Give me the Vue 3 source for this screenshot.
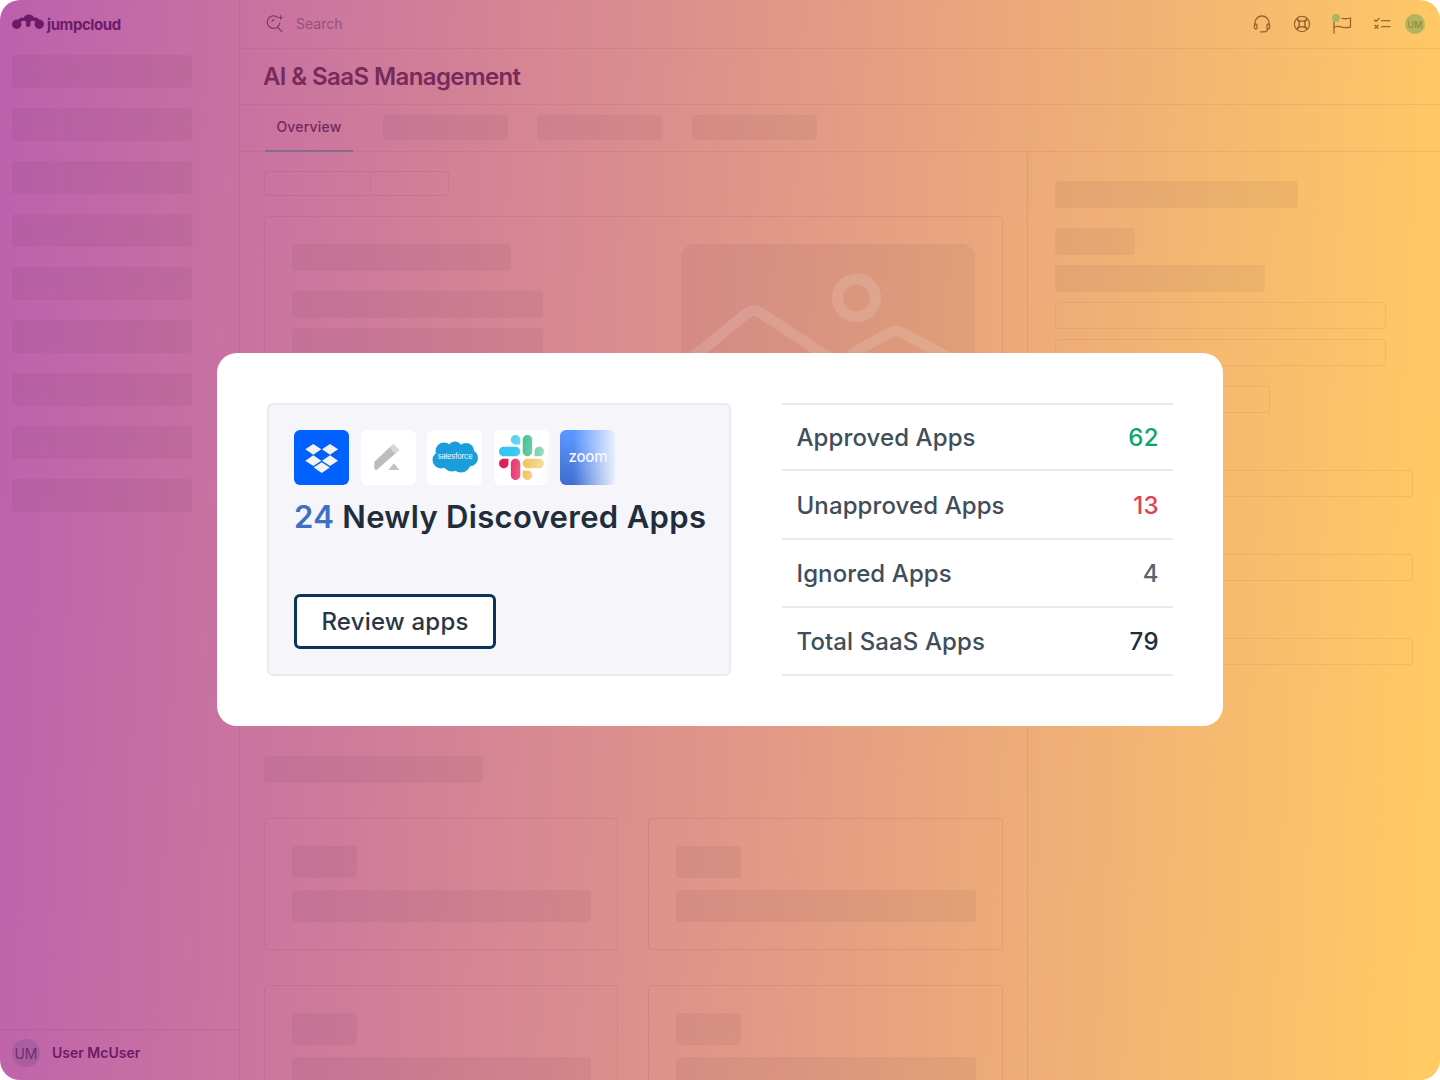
<script setup>
const navBars = 9
const rows = [
  { label: 'Approved Apps', value: 62, tone: 'green' },
  { label: 'Unapproved Apps', value: 13, tone: 'red' },
  { label: 'Ignored Apps', value: 4, tone: 'gray' },
  { label: 'Total SaaS Apps', value: 79, tone: 'dark' }
]
</script>

<template>
  <div class="page">
    <aside class="sidebar">
      <div class="logo">
        <svg class="logo-mark" viewBox="0 0 32 16" width="32" height="16">
          <circle cx="4.7" cy="10.3" r="4.7" fill="#6b1c68" />
          <circle cx="27.3" cy="10.3" r="4.7" fill="#6b1c68" />
          <path d="M6 6C8 3 10 3 11.5 4C13 -0.5 20 -1 22.5 4C24 3 26 3.5 27 6L23 8C22 6.5 20 6.5 18.5 7.5L18.5 12C18.5 13 14 13 14 12L14 7.5C12.5 6.5 10 6.5 9 8Z" fill="#6b1c68" />
        </svg>
        <span class="logo-text">jumpcloud</span>
      </div>
      <div class="nav">
        <div v-for="n in navBars" :key="n" class="skel nav-bar"></div>
      </div>
      <div class="user">
        <span class="user-avatar">UM</span>
        <span class="user-name">User McUser</span>
      </div>
    </aside>

    <main class="main">
      <header class="topbar">
        <div class="search">
          <svg viewBox="0 0 20 20" width="20" height="20" fill="none" stroke="#7d3a6c" stroke-width="1.2" stroke-linecap="round">
            <path d="M12.5 3.2A6.3 6.3 0 1 0 14.8 9" />
            <path d="M12.4 13.2L17 17.6" />
            <path d="M7 7.5a2.6 2.6 0 0 1 2-1.8" />
            <path d="M15.6 1.6v4M13.6 3.6h4" stroke-width="1" />
          </svg>
          <span class="search-text">Search</span>
        </div>
        <div class="tools">
          <svg viewBox="0 0 20 20" width="20" height="20" fill="none" stroke="#99652a" stroke-width="1.3" stroke-linecap="round">
            <path d="M3 11V9a7 7 0 0 1 14 0v2" />
            <rect x="2.4" y="10" width="2.6" height="5" rx="1.3" />
            <rect x="15" y="10" width="2.6" height="5" rx="1.3" />
            <path d="M15.5 15c0 2-1.5 2.8-3.5 2.8H8.5" />
          </svg>
          <svg viewBox="0 0 20 20" width="20" height="20" fill="none" stroke="#99652a" stroke-width="1.3">
            <circle cx="10" cy="10" r="7.6" />
            <circle cx="10" cy="10" r="3.1" />
            <path d="M4.7 4.7l3 3M15.3 4.7l-3 3M4.7 15.3l3-3M15.3 15.3l-3-3" stroke-width="2" />
          </svg>
          <span class="flag">
            <svg viewBox="0 0 20 20" width="20" height="20" fill="none" stroke="#99652a" stroke-width="1.3" stroke-linecap="round" stroke-linejoin="round">
              <path d="M2 19V8" />
              <path d="M2 13c3-1 4-1 6-.3s6 1.5 10.5.3V4c-3 1-5.5 1-8.5.3" />
            </svg>
            <i class="flag-dot"></i>
          </span>
          <svg viewBox="0 0 20 20" width="20" height="20" fill="none" stroke="#99652a" stroke-width="1.3" stroke-linecap="round" stroke-linejoin="round">
            <path d="M9.6 6.7H18M9.6 12.7H18" />
            <path d="M2.5 6l1.5 1.5L7 4.5" />
            <path d="M3 11.2l3 3M6 11.2l-3 3" />
          </svg>
          <span class="top-avatar">UM</span>
        </div>
      </header>

      <div class="title-row">
        <h1>AI &amp; SaaS Management</h1>
      </div>

      <nav class="tabs">
        <span class="tab-active">Overview</span>
        <div class="skel tab-skel"></div>
        <div class="skel tab-skel"></div>
        <div class="skel tab-skel"></div>
      </nav>

      <div class="body">
        <section class="col-left">
          <div class="segment"><span></span><span></span></div>

          <div class="card hero">
            <div class="hero-text">
              <div class="skel hero-title"></div>
              <div class="skel hero-line"></div>
              <div class="skel hero-line"></div>
            </div>
            <div class="skel hero-image">
              <svg viewBox="0 0 294 200" width="294" height="200" fill="none" stroke="rgba(255,255,255,0.13)" stroke-width="11" stroke-linejoin="round" stroke-linecap="round">
                <circle cx="175.5" cy="54" r="19" />
                <path d="M10 115L66 69Q73 64 80 69L150 115" />
                <path d="M172 109L208 89Q215 85 222 89L270 115" />
              </svg>
            </div>
          </div>

          <div class="skel section-title"></div>

          <div class="tiles">
            <div v-for="n in 4" :key="n" class="card tile">
              <div class="skel tile-a"></div>
              <div class="skel tile-b"></div>
            </div>
          </div>
        </section>

        <section class="col-right">
          <div class="skel r1"></div>
          <div class="skel r2"></div>
          <div class="skel r3"></div>
          <div class="field f1"></div>
          <div class="field f1"></div>
          <div class="field f2"></div>
          <div class="field f3"></div>
          <div class="field f3"></div>
          <div class="field f3"></div>
        </section>
      </div>
    </main>

    <div class="modal">
      <div class="discover">
        <div class="apps">
          <div class="app dropbox">
            <svg viewBox="0 0 55 55" width="55" height="55" fill="#f4f3f0">
              <path d="M11.3 19.3l8-5.4 8 5.4-8 5.4z" />
              <path d="M28 19.3l8-5.4 8 5.4-8 5.4z" />
              <path d="M11.3 30.7l8-5.4 8 5.4-8 5.4z" />
              <path d="M28 30.7l8-5.4 8 5.4-8 5.4z" />
              <path d="M19.7 37.6l8-5.4 8 5.4-8 5.4z" />
            </svg>
          </div>
          <div class="app">
            <svg viewBox="0 0 55 55" width="55" height="55">
              <path d="M13.3 31.7L32.3 14L38.3 20L15.7 40L13.3 39.3Z" fill="#bdbdbd" />
              <path d="M32.3 14L38.3 20L34 23.8L29 18Z" fill="#d8d8d8" />
              <path d="M27.3 40L33 33.3L38.3 40Z" fill="#c2c2c2" />
            </svg>
          </div>
          <div class="app">
            <svg viewBox="0 0 55 55" width="55" height="55">
              <g fill="#1a9edb" transform="translate(1 0)">
                <circle cx="16" cy="21" r="8.5" />
                <circle cx="27" cy="19" r="7.5" />
                <circle cx="38" cy="21" r="8" />
                <circle cx="13" cy="30" r="8.5" />
                <circle cx="41.5" cy="28" r="8.5" />
                <circle cx="24" cy="32" r="9.5" />
                <circle cx="33" cy="33" r="9.5" />
              </g>
              <text x="28" y="28.5" text-anchor="middle" class="sf-text">salesforce</text>
            </svg>
          </div>
          <div class="app fade">
            <svg class="slack" viewBox="0 0 122.8 122.8" width="45" height="45">
              <path d="M25.8 77.6c0 7.1-5.8 12.9-12.9 12.9S0 84.7 0 77.6s5.8-12.9 12.9-12.9h12.9v12.9z" fill="#e01e5a" />
              <path d="M32.3 77.6c0-7.1 5.8-12.9 12.9-12.9s12.9 5.8 12.9 12.9v32.3c0 7.1-5.8 12.9-12.9 12.9s-12.9-5.8-12.9-12.9V77.6z" fill="#e8356c" />
              <path d="M45.2 25.8c-7.1 0-12.9-5.8-12.9-12.9S38.1 0 45.2 0s12.9 5.8 12.9 12.9v12.9H45.2z" fill="#5cd0f3" />
              <path d="M45.2 32.3c7.1 0 12.9 5.8 12.9 12.9s-5.8 12.9-12.9 12.9H12.9C5.8 58.1 0 52.3 0 45.2s5.8-12.9 12.9-12.9h32.3z" fill="#36c5f0" />
              <path d="M97 45.2c0-7.1 5.8-12.9 12.9-12.9s12.9 5.8 12.9 12.9-5.8 12.9-12.9 12.9H97V45.2z" fill="#2eb67d" />
              <path d="M90.5 45.2c0 7.1-5.8 12.9-12.9 12.9s-12.9-5.8-12.9-12.9V12.9C64.7 5.8 70.5 0 77.6 0s12.9 5.8 12.9 12.9v32.3z" fill="#2eb67d" />
              <path d="M77.6 97c7.1 0 12.9 5.8 12.9 12.9s-5.8 12.9-12.9 12.9-12.9-5.8-12.9-12.9V97h12.9z" fill="#ecb22e" />
              <path d="M77.6 90.5c-7.1 0-12.9-5.8-12.9-12.9s5.8-12.9 12.9-12.9h32.3c7.1 0 12.9 5.8 12.9 12.9s-5.8 12.9-12.9 12.9H77.6z" fill="#ecb22e" />
            </svg>
          </div>
          <div class="app zoom"><span>zoom</span></div>
        </div>
        <h2><em>24</em> Newly Discovered Apps</h2>
        <button class="review" type="button">Review apps</button>
      </div>

      <ul class="stats">
        <li v-for="row in rows" :key="row.label">
          <span class="stat-label">{{ row.label }}</span>
          <span class="stat-value" :class="row.tone">{{ row.value }}</span>
        </li>
      </ul>
    </div>
  </div>
</template>

<style>
html, body { margin: 0; background: #fff; }
</style>

<style scoped>
* { box-sizing: border-box; }
.page {
  position: relative;
  width: 1440px;
  height: 1080px;
  overflow: hidden;
  display: flex;
  border-radius: 20px;
  background: linear-gradient(93deg, #bd60ad 0%, #df9589 50%, #ffca64 98%);
  font-family: Inter, "Liberation Sans", sans-serif;
}
.skel { background: rgba(70, 40, 45, 0.06); border-radius: 4px; }

.sidebar {
  width: 240px;
  flex: none;
  display: flex;
  flex-direction: column;
  border-right: 1px solid rgba(140, 50, 90, 0.12);
}
.logo { height: 49px; padding: 14px 0 0 12px; display: flex; align-items: flex-start; gap: 3px; }
.logo-mark { display: block; }
.logo-text { margin-top: 1px; font-size: 15px; font-weight: 700; letter-spacing: -0.4px; line-height: 20px; color: #6b1c68; }
.nav { display: flex; flex-direction: column; gap: 20px; padding: 6px 47px 0 12px; flex: 1; }
.nav-bar { height: 33px; }
.user {
  height: 51px;
  border-top: 1px solid rgba(140, 50, 90, 0.14);
  display: flex;
  align-items: center;
  gap: 12px;
  padding: 0 0 4px 12px;
}
.user-avatar {
  width: 28px; height: 28px; border-radius: 50%;
  background: #a95f9f; color: #6e2c72;
  font-size: 14px; display: flex; align-items: center; justify-content: center;
}
.user-name { margin-top: -1px; font-size: 14px; font-weight: 600; color: #6b1c68; }

.main { flex: 1; min-width: 0; display: flex; flex-direction: column; }
.topbar {
  height: 49px; flex: none;
  display: flex; align-items: center; justify-content: space-between;
  padding: 0 15px 0 25px;
  border-bottom: 1px solid rgba(140, 60, 60, 0.1);
}
.search { display: flex; align-items: center; gap: 11px; font-size: 14px; color: #94507a; }
.search-text { margin-top: -1px; }
.tools { display: flex; align-items: center; gap: 20px; }
.tools svg { display: block; }
.flag { position: relative; display: block; width: 20px; height: 20px; }
.flag-dot { position: absolute; left: 0; top: 0; width: 8px; height: 8px; border-radius: 50%; background: #afb360; }
.top-avatar {
  width: 20px; height: 20px; border-radius: 50%;
  margin-left: -7px;
  background: #b2b45f; color: #93832f;
  font-size: 9px; display: flex; align-items: center; justify-content: center;
}

.title-row {
  height: 56px; flex: none;
  display: flex; align-items: center;
  padding-left: 23px;
  border-bottom: 1px solid rgba(140, 60, 60, 0.1);
}
h1 { margin: 0; font-size: 24px; font-weight: 600; letter-spacing: -0.6px; color: #772a5b; }

.tabs {
  height: 47px; flex: none;
  display: flex; align-items: center;
  padding-left: 25px;
  gap: 29.5px;
  border-bottom: 1px solid rgba(140, 60, 60, 0.1);
}
.tab-active {
  width: 88px; height: 47px;
  display: flex; align-items: center; justify-content: center;
  padding-bottom: 1px;
  font-size: 14px; font-weight: 500; letter-spacing: 0.2px; color: #73295f;
  border-bottom: 2px solid #8a6b8c;
}
.tab-skel { width: 125px; height: 25px; margin-top: -2px; }

.body { flex: 1; min-height: 0; display: flex; }
.col-left {
  width: 788px; flex: none;
  padding: 19px 24px 0;
  border-right: 1px solid rgba(150, 70, 50, 0.12);
}
.segment {
  display: flex; width: 185px; height: 25px;
  border: 1px solid rgba(140, 50, 80, 0.12); border-radius: 3px;
}
.segment span:first-child { width: 106px; border-right: 1px solid rgba(140, 50, 80, 0.12); }
.card { border: 1px solid rgba(140, 50, 80, 0.12); border-radius: 4px; }
.hero {
  margin-top: 20px; height: 508px; width: 739px;
  padding: 27px;
  display: flex; justify-content: space-between;
}
.hero-text { display: flex; flex-direction: column; }
.hero-title { width: 219px; height: 27px; }
.hero-line { width: 251px; height: 27px; margin-top: 10px; }
.hero-title + .hero-line { margin-top: 20px; }
.hero-image { width: 294px; height: 220px; border-radius: 14px; overflow: hidden; }
.hero-image svg { display: block; }
.section-title { width: 219px; height: 27px; margin-top: 32px; }
.tiles {
  display: grid;
  grid-template-columns: 354px 355px;
  gap: 35px 30px;
  margin-top: 35px;
}
.tile { height: 132px; padding: 27px 26px 27px 27px; }
.tile-a { width: 65px; height: 32px; }
.tile-b { height: 32px; margin-top: 12px; }

.col-right { flex: 1; padding: 29px 0 0 27px; }
.r1 { width: 243px; height: 27px; }
.r2 { width: 80px; height: 27px; margin-top: 20px; }
.r3 { width: 210px; height: 27px; margin-top: 10px; }
.field { height: 27px; border: 1px solid rgba(170, 90, 40, 0.12); border-radius: 3px; }
.f1 { width: 331px; margin-top: 10px; }
.f2 { width: 215px; margin-top: 20px; }
.f3 { width: 358px; margin-top: 57px; }

.modal {
  position: absolute;
  left: 217px; top: 353px;
  width: 1006px; height: 373px;
  padding: 50px;
  background: #fff;
  border-radius: 20px;
  display: flex;
  justify-content: space-between;
}
.discover {
  width: 464px;
  display: flex; flex-direction: column; align-items: flex-start;
  padding: 25px;
  background: #f5f5fa;
  border: 2px solid #e9ebef;
  border-radius: 6px;
}
.apps { display: flex; gap: 11.6px; }
.app {
  position: relative;
  width: 55px; height: 55px;
  border-radius: 6px;
  background: #fff;
  display: flex; align-items: center; justify-content: center;
  overflow: hidden;
}
.app svg { display: block; }
.dropbox { background: #0061ff; }
.sf-text { font-family: Inter, "Liberation Sans", sans-serif; font-size: 7.5px; letter-spacing: -0.2px; fill: #f2fafe; }
.fade::after {
  content: "";
  position: absolute; inset: 0;
  background: linear-gradient(100deg, rgba(255,255,255,0) 35%, rgba(255,255,255,0.55) 85%, rgba(245,245,250,0.8) 100%);
}
.zoom {
  background:
    linear-gradient(90deg, rgba(255,255,255,0) 25%, #e9effb 100%),
    linear-gradient(20deg, #3e6bc9 0%, #5b95ff 70%);
  color: #f4f7fd;
  font-size: 15px;
  font-weight: 500;
  letter-spacing: -0.2px;
  padding: 0 0 2px 0;
}
h2 {
  margin: 11px 0 0;
  font-size: 31px;
  font-weight: 600;
  line-height: 42px;
  letter-spacing: 0.33px;
  color: #1f2d3d;
  white-space: nowrap;
}
h2 em { font-style: normal; color: #3f6fc4; }
.review {
  margin-top: auto;
  width: 202px; height: 55px;
  background: #fff;
  border: 3px solid #0a3558;
  border-radius: 6px;
  font: 500 24px Inter, "Liberation Sans", sans-serif;
  letter-spacing: 0.2px;
  color: #2a3644;
  padding: 0;
}
.stats {
  list-style: none; margin: 0; padding: 0;
  width: 391px; height: 273px;
  display: flex; flex-direction: column;
  box-shadow: inset 0 2px #e6eaec;
}
.stats li {
  height: 68.25px;
  display: flex; align-items: center; justify-content: space-between;
  padding: 2px 14px 0 14.5px;
  border-bottom: 2px solid #e6eaec;
}
.stat-label { font-size: 24px; font-weight: 500; letter-spacing: 0.1px; color: #404d5b; }
.stat-value { font-size: 24px; font-weight: 500; letter-spacing: 0.4px; }
.green { color: #0fa56a; }
.red { color: #e6404f; }
.gray { color: #576270; }
.dark { color: #1f2d3d; }
</style>
